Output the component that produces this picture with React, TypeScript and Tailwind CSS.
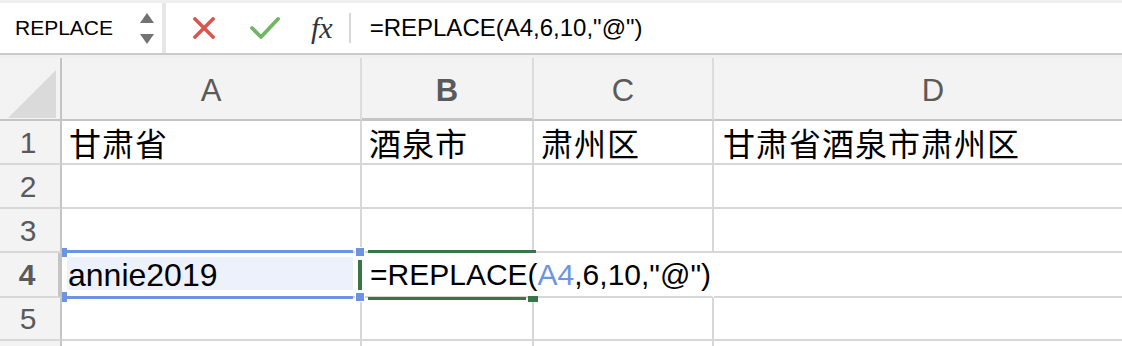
import React from 'react';

const FONT = "font-['Liberation_Sans','Noto_Sans_CJK_SC',sans-serif]";

function Cjk({ children }: { children: React.ReactNode }) {
  return <span className="text-[32px] tracking-[1px] font-['Noto_Sans_CJK_SC',sans-serif]">{children}</span>;
}

function FormulaBar() {
  return (
    <div className="flex h-[55px] border-t-[3px] border-b-2 border-t-[#efefef] border-b-[#cbcbcb] bg-white">
      {/* Name box */}
      <div className="flex w-[162px] items-center pl-[15px] pr-[8px]">
        <span className="text-[21px] text-black">REPLACE</span>
        <div className="ml-auto flex flex-col gap-[11px]">
          <svg width="14" height="10" viewBox="0 0 14 10">
            <path d="M7 0 L14 10 L0 10 Z" fill="#727272" />
          </svg>
          <svg width="14" height="10" viewBox="0 0 14 10">
            <path d="M0 0 L14 0 L7 10 Z" fill="#727272" />
          </svg>
        </div>
      </div>
      <div className="w-[4px] bg-[#e6e6e6]" />
      <div className="flex flex-1 items-center">
        <svg className="ml-[27px]" width="22" height="22" viewBox="0 0 22 22">
          <path d="M2 2 L20 20 M20 2 L2 20" stroke="#d9574f" strokeWidth="3.6" strokeLinecap="square" />
        </svg>
        <svg className="ml-[35px]" width="30" height="22" viewBox="0 0 30 22">
          <path d="M2 11 L11 20 L28 2" stroke="#6fb763" strokeWidth="3.8" fill="none" strokeLinecap="round" strokeLinejoin="round" />
        </svg>
        <span className="ml-[31px] font-['Liberation_Serif',serif] text-[30px] italic leading-none text-[#333]">fx</span>
        <div className="ml-[16px] h-[30px] w-[2px] bg-[#d6d6d6]" />
        <span className="ml-[19px] text-[24px] text-black">=REPLACE(A4,6,10,"@")</span>
      </div>
    </div>
  );
}

const cell = 'border-r-2 border-b-2 border-[#d7d7d7] bg-white';
const rowHead = 'flex items-center justify-center pr-[4px] border-r-2 border-b-2 border-r-[#c4c4c4] border-b-[#d7d7d7] bg-[#f3f3f3] text-[30px] text-[#5a5a5a]';
const colHead = 'flex items-center justify-center pt-[6px] border-r-2 border-b-2 border-r-[#dcdcdc] border-b-[#c4c4c4] bg-[#f3f3f3] text-[31px] text-[#5a5a5a]';
const textCell = 'flex items-center pl-[7px] whitespace-nowrap text-black';

export default function App() {
  return (
    <div className={`h-[346px] w-[1122px] overflow-hidden bg-white ${FONT}`}>
      <FormulaBar />
      <div className="h-[3px] bg-[#f0f0f0]" />
      <div className="grid w-[1154px] grid-cols-[62px_300px_172px_180px_440px] grid-rows-[63px_44px_44px_44px_45px_43px_20px]">
        {/* header row */}
        <div className="relative border-r-2 border-b-2 border-r-[#c4c4c4] border-b-[#c4c4c4] bg-[#f3f3f3]">
          <svg className="absolute left-[8px] top-[12px]" width="48" height="48" viewBox="0 0 48 48">
            <path d="M0 48 L48 0 L48 48 Z" fill="#dadada" />
          </svg>
        </div>
        <div className={colHead}>A</div>
        <div className={`${colHead} border-b-[3px] border-b-[#3b7446] bg-[#e3e3e3] font-bold text-[#3b7446]`}>B</div>
        <div className={colHead}>C</div>
        <div className={colHead}>D</div>

        {/* row 1 */}
        <div className={rowHead}>1</div>
        <div className={`${cell} ${textCell}`}><Cjk>甘肃省</Cjk></div>
        <div className={`${cell} ${textCell}`}><Cjk>酒泉市</Cjk></div>
        <div className={`${cell} ${textCell}`}><Cjk>肃州区</Cjk></div>
        <div className={`${cell} ${textCell} pl-[9px]`}><Cjk>甘肃省酒泉市肃州区</Cjk></div>

        {/* row 2 */}
        <div className={rowHead}>2</div>
        <div className={cell} />
        <div className={cell} />
        <div className={cell} />
        <div className={cell} />

        {/* row 3 */}
        <div className={rowHead}>3</div>
        <div className={cell} />
        <div className={cell} />
        <div className={cell} />
        <div className={cell} />

        {/* row 4 */}
        <div className={`${rowHead} border-r-4 border-r-[#3b7446] bg-[#e2e2e2] font-bold text-[#3b7446]`}>4</div>
        <div className={`relative ${cell} border-r-white`}>
          <div className="absolute left-[5px] right-[7px] top-[4px] bottom-[6px] bg-[#edf1fc]" />
          <div className="absolute left-[5px] top-[-3px] h-[3px] w-[286px] bg-[#6d93e3]" />
          <div className="absolute left-[5px] top-[43px] h-[3px] w-[286px] bg-[#6d93e3]" />
          <div className="absolute left-0 top-[-5px] h-[9px] w-[5px] bg-[#6d93e3]" />
          <div className="absolute left-0 top-[39px] h-[10px] w-[5px] bg-[#6d93e3]" />
          <div className="absolute left-[293px] top-[-6px] z-10 h-[10px] w-[10px] border border-white bg-[#6d93e3]" />
          <div className="absolute left-[293px] top-[39px] z-10 h-[10px] w-[10px] border border-white bg-[#6d93e3]" />
          <div className="relative flex h-full items-center pl-[6px] text-[32px] text-black">annie2019</div>
        </div>
        <div className={`relative col-span-2 ${cell} border-r-transparent`}>
          <div className="absolute left-[-4px] top-[7px] h-[30px] w-[4px] bg-[#3b7446]" />
          <div className="absolute left-[6px] top-[-3px] h-[3px] w-[168px] bg-[#3b7446]" />
          <div className="absolute left-[6px] top-[44px] h-[3px] w-[158px] bg-[#3b7446]" />
          <div className="absolute left-[166px] top-[43px] h-[6px] w-[10px] bg-[#3b7446]" />
          <div className="relative z-20 flex h-full items-center pl-[8px] whitespace-nowrap text-[30px] text-black">
            =REPLACE(<span className="text-[#6d93e3]">A4</span>,6,10,"@")
          </div>
        </div>
        <div className={cell} />

        {/* row 5 */}
        <div className={rowHead}>5</div>
        <div className={cell} />
        <div className={cell} />
        <div className={cell} />
        <div className={cell} />

        {/* row 6 (partial) */}
        <div className={rowHead} />
        <div className={cell} />
        <div className={cell} />
        <div className={cell} />
        <div className={cell} />
      </div>
    </div>
  );
}
